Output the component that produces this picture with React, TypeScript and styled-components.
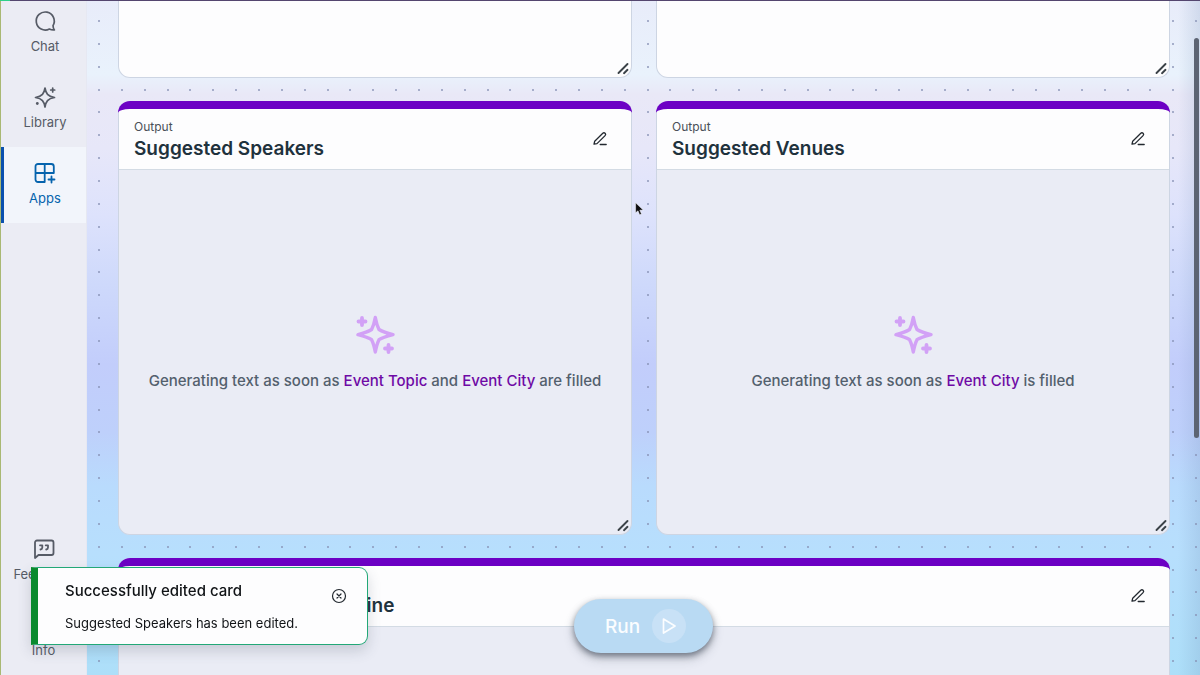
import React from "react";
import styled, { createGlobalStyle } from "styled-components";

const GlobalStyle = createGlobalStyle`
  *, *::before, *::after { box-sizing: border-box; }
  html, body, #root { height: 100%; }
  body {
    margin: 0;
    overflow: hidden;
    font-family: Inter, "Liberation Sans", sans-serif;
    color: #1f323d;
  }
  button { font: inherit; color: inherit; }
  p, h2 { margin: 0; }
`;

const Shell = styled.div`
  display: flex;
  height: 100vh;
  border-left: 1px solid #a9b873;
  position: relative;
`;

const TopEdge = styled.div`
  position: absolute;
  top: 0;
  left: -1px;
  right: 0;
  height: 1px;
  background: linear-gradient(90deg, #2fd08a 10px, #54466f 10px);
  z-index: 5;
`;

const Sidebar = styled.aside`
  flex: 0 0 86px;
  display: flex;
  flex-direction: column;
  justify-content: space-between;
  background: #ebecf4;
  border-right: 1px solid #e6e8f2;
  overflow: hidden;
`;

const Nav = styled.nav<{ $scrolled?: boolean }>`
  display: flex;
  flex-direction: column;
  margin-top: ${(p) => (p.$scrolled ? "-5px" : "0")};
`;

const NavLink = styled.a<{ $active?: boolean; $marker?: boolean }>`
  display: flex;
  flex-direction: column;
  align-items: center;
  gap: 3px;
  height: 76px;
  padding-top: 14px;
  border-left: ${(p) => (p.$marker ? "3px" : "0")} solid
    ${(p) => (p.$active ? "#0a50ae" : "transparent")};
  background: ${(p) => (p.$active ? "#f2f5fb" : "transparent")};
  color: ${(p) => (p.$active ? "#0563ad" : "#565b66")};
  font-size: 13px;
  line-height: 20px;
  text-decoration: none;
`;

const Main = styled.main`
  position: relative;
  flex: 1;
  min-width: 0;
  overflow: hidden;
  background:
    linear-gradient(90deg, transparent calc(100% - 22px), rgba(110, 140, 180, 0.2)),
    linear-gradient(
      180deg,
      #e8ecfa 0,
      #e9f2fc 11%,
      #e9e8f7 14%,
      #e7e7f9 22%,
      #dde2fc 32%,
      #ced9fb 42%,
      #c2cdfb 54%,
      #bed0fb 64%,
      #b9dbfd 72%,
      #b7dffd 82%,
      #addff9 100%
    );
`;

const DotLayer = styled.svg`
  position: absolute;
  inset: 0;
  width: 100%;
  height: 100%;
`;

const Board = styled.div`
  position: relative;
  display: grid;
  grid-template-columns: 1fr 1fr;
  grid-template-rows: 78px 433px 433px;
  gap: 24px;
  padding: 0 30px 0 31px;
`;

const CardBox = styled.section<{ $wide?: boolean; $tail?: boolean }>`
  position: relative;
  display: flex;
  flex-direction: column;
  grid-column: ${(p) => (p.$wide ? "1 / -1" : "auto")};
  margin-top: ${(p) => (p.$tail ? "0" : "-1px")};
  border: 1px solid #cdd5e3;
  border-top: 0;
  border-radius: ${(p) => (p.$tail ? "0 0 12px 12px" : "12px")};
  background: ${(p) => (p.$tail ? "#fdfdfe" : "#eaecf5")};
`;

const CardHeader = styled.header`
  display: flex;
  align-items: center;
  justify-content: space-between;
  height: 69px;
  padding: 8px 23px 0 15px;
  background: #fdfdfe;
  border-bottom: 1px solid #d3dbe4;
  border-radius: 12px 12px 0 0;
`;

const Heading = styled.div`
  padding-top: 2px;
`;

const Accent = styled.div`
  position: absolute;
  inset: 0 -1px auto -1px;
  height: 24px;
  border-top: 8px solid #6c00c4;
  border-radius: 12px 12px 0 0;
  pointer-events: none;
`;

const Kind = styled.p`
  font-size: 12px;
  line-height: 16px;
  color: #4a5058;
`;

const Title = styled.h2`
  font-size: 19px;
  line-height: 27px;
  font-weight: 600;
`;

const IconButton = styled.button`
  display: flex;
  padding: 0;
  border: 0;
  background: none;
  color: #22282f;
  cursor: pointer;
`;

const CardBody = styled.div`
  flex: 1;
  display: flex;
  flex-direction: column;
  align-items: center;
  justify-content: center;
  gap: 14px;
  padding-top: 4px;
`;

const Hint = styled.p`
  font-size: 15px;
  line-height: 24px;
  font-weight: 500;
  color: #53606d;
  white-space: nowrap;
`;

const Field = styled.span`
  color: #6f0aa5;
`;

const Grip = styled.svg`
  position: absolute;
  right: 1px;
  bottom: 2px;
`;

const ScrollThumb = styled.div`
  position: absolute;
  top: 38px;
  right: 1px;
  width: 5px;
  height: 400px;
  border-radius: 3px;
  background: #5c6473;
`;

const RunDock = styled.div`
  position: absolute;
  left: 0;
  right: 0;
  bottom: 22px;
  display: flex;
  justify-content: center;
`;

const RunButton = styled.button`
  display: flex;
  align-items: center;
  gap: 12px;
  height: 54px;
  padding: 0 27px 0 31px;
  border: 0;
  border-radius: 27px;
  background: #b9daf3;
  color: #fbfdff;
  font-size: 19px;
  font-weight: 500;
  box-shadow: 0 3px 6px rgba(50, 60, 75, 0.6), 0 6px 12px rgba(50, 60, 75, 0.2);
`;

const PlayDisc = styled.span`
  display: flex;
  align-items: center;
  justify-content: center;
  width: 34px;
  height: 34px;
  border-radius: 50%;
  background: #c8e1f6;
`;

const Toast = styled.div`
  position: fixed;
  left: 31px;
  bottom: 30px;
  display: flex;
  align-items: flex-start;
  justify-content: space-between;
  width: 337px;
  height: 78px;
  padding: 11px 20px 0 27px;
  border: 1px solid #22a877;
  border-left: 7px solid #0a8a2e;
  border-radius: 0 9px 9px 0;
  background: #fdfdfe;
  box-shadow: 0 6px 14px rgba(60, 70, 90, 0.2);
  color: #101316;
`;

const ToastText = styled.div`
  display: flex;
  flex-direction: column;
  gap: 10px;
`;

const ToastTitle = styled.p`
  font-size: 15px;
  line-height: 24px;
  font-weight: 500;
`;

const ToastMessage = styled.p`
  font-size: 13px;
  line-height: 20px;
`;

const ToastClose = styled(IconButton)`
  margin-top: 9px;
`;

const Pointer = styled.svg`
  position: absolute;
  left: 634px;
  top: 202px;
`;

const stroke = {
  fill: "none",
  stroke: "currentColor",
  strokeLinecap: "round" as const,
  strokeLinejoin: "round" as const,
};

const ChatIcon = () => (
  <svg width="24" height="24" viewBox="0 0 24 24" {...stroke} strokeWidth="1.7" aria-hidden>
    <path d="M20 16.600A9 9 0 1 0 16.400 20c1.500.8 3.200 1.100 5 .9-.9-1.200-1.400-2.700-1.400-4.300Z" />
  </svg>
);

const LibraryIcon = () => (
  <svg width="24" height="24" viewBox="0 0 24 24" {...stroke} strokeWidth="1.7" aria-hidden>
    <path d="M12 3c.9 5.500 2.700 8.300 9.500 9.500-6.800 1.200-8.600 4-9.500 9.500-.9-5.500-2.700-8.300-9.500-9.500C9.300 11.300 11.100 8.500 12 3Z" />
    <path d="M19.700 3v4M17.700 5h4" />
    <circle cx="4.300" cy="18.500" r="1.400" fill="currentColor" stroke="none" />
  </svg>
);

const AppsIcon = () => (
  <svg width="24" height="24" viewBox="0 0 24 24" {...stroke} strokeWidth="1.8" aria-hidden>
    <path d="M20.800 12V5.500a2.500 2.500 0 0 0-2.500-2.500H5a2.500 2.500 0 0 0-2.500 2.500v13A2.500 2.500 0 0 0 5 21h6.700V3M2.500 12h18.300" />
    <path d="M18.500 15.500v6M15.500 18.500h6" />
  </svg>
);

const FeedbackIcon = () => (
  <svg width="24" height="24" viewBox="0 0 24 24" {...stroke} strokeWidth="1.8" aria-hidden>
    <path d="M3 21V5.500A2 2 0 0 1 5 3.500h14.500a2 2 0 0 1 2 2v10.500a2 2 0 0 1-2 2H6.500Z" />
    <path d="M8 8.300h2.300v2.200c0 1-.8 1.800-1.800 2M13.700 8.300H16v2.200c0 1-.8 1.800-1.800 2" />
  </svg>
);

const InfoIcon = () => (
  <svg width="24" height="24" viewBox="0 0 24 24" {...stroke} strokeWidth="1.7" aria-hidden>
    <circle cx="12" cy="12" r="9" />
    <path d="M12 11v5M12 8v0" />
  </svg>
);

const EditIcon = () => (
  <svg width="16" height="16" viewBox="0 0 16 16" {...stroke} strokeWidth="1.300" aria-hidden>
    <path d="M2 13.200 2.700 10.200 10.800 2.300a1.600 1.600 0 0 1 2.300 2.300L5 12.600ZM8.200 13.500h6" />
  </svg>
);

const SparkleIcon = () => (
  <svg width="40" height="40" viewBox="0 0 40 40" {...stroke} stroke="#d2a1f6" aria-hidden>
    <path
      strokeWidth="3.400"
      d="M20.300 2.500C21.300 8 22.500 11.500 24 14.500c3 1.900 8 3.700 14 5.200-6 1.500-11 3-14 5-1.500 3-2.700 7-3.700 12.300-1-5.300-2.200-9.300-3.700-12.300-3-2-8-3.500-13.600-5 5.600-1.500 10.600-3.300 13.600-5.200 1.500-3 2.700-6.500 3.700-12Z"
    />
    <path strokeWidth="3.800" d="M7 3v7M3.500 6.500h7M33.500 30v7M30 33.500h7" />
  </svg>
);

const ResizeGrip = () => (
  <Grip width="13" height="13" viewBox="0 0 13 13" {...stroke} stroke="#3b4248" strokeWidth="1.900" aria-hidden>
    <path d="M1.500 11 10.500 2M7 11.200l3.500-3.400" />
  </Grip>
);

/* One 160px tile holds seven dots in each direction. */
const DOTS = [0, 23, 46, 69, 91, 114, 137];

const DotGrid = () => (
  <DotLayer aria-hidden>
    <defs>
      <pattern id="dots" x="11" y="20" width="160" height="160" patternUnits="userSpaceOnUse">
        {DOTS.map((y) =>
          DOTS.map((x) => (
            <circle key={`${x}-${y}`} cx={x + 1} cy={y + 1} r="1" fill="#8590b4" fillOpacity="0.9" />
          ))
        )}
      </pattern>
    </defs>
    <rect width="100%" height="100%" fill="url(#dots)" />
  </DotLayer>
);

type OutputCardProps = {
  title: string;
  wide?: boolean;
  children?: React.ReactNode;
};

const OutputCard = ({ title, wide, children }: OutputCardProps) => (
  <CardBox $wide={wide}>
    <CardHeader>
      <Heading>
        <Kind>Output</Kind>
        <Title>{title}</Title>
      </Heading>
      <IconButton type="button" aria-label={`Edit ${title}`}>
        <EditIcon />
      </IconButton>
    </CardHeader>
    <Accent />
    <CardBody>
      {children && (
        <>
          <SparkleIcon />
          <Hint>{children}</Hint>
        </>
      )}
    </CardBody>
    <ResizeGrip />
  </CardBox>
);

export default function App() {
  return (
    <Shell>
      <GlobalStyle />
      <TopEdge />
      <Sidebar>
        <Nav $scrolled aria-label="Main">
          <NavLink href="#chat" $marker>
            <ChatIcon />
            Chat
          </NavLink>
          <NavLink href="#library" $marker>
            <LibraryIcon />
            Library
          </NavLink>
          <NavLink href="#apps" $marker $active aria-current="page">
            <AppsIcon />
            Apps
          </NavLink>
        </Nav>
        <Nav aria-label="Support">
          <NavLink href="#feedback">
            <FeedbackIcon />
            Feedback
          </NavLink>
          <NavLink href="#info">
            <InfoIcon />
            Info
          </NavLink>
        </Nav>
      </Sidebar>
      <Main>
        <DotGrid />
        <Board>
          <CardBox $tail>
            <ResizeGrip />
          </CardBox>
          <CardBox $tail>
            <ResizeGrip />
          </CardBox>
          <OutputCard title="Suggested Speakers">
            Generating text as soon as <Field>Event Topic</Field> and <Field>Event City</Field> are
            filled
          </OutputCard>
          <OutputCard title="Suggested Venues">
            Generating text as soon as <Field>Event City</Field> is filled
          </OutputCard>
          <OutputCard title="Suggested Schedule Outline" wide />
        </Board>
        <ScrollThumb />
        <RunDock>
          <RunButton type="button">
            Run
            <PlayDisc>
              <svg width="20" height="20" viewBox="0 0 20 20" {...stroke} strokeWidth="1.700" aria-hidden>
                <path d="M4.500 3 16 10 4.500 17Z" />
              </svg>
            </PlayDisc>
          </RunButton>
        </RunDock>
      </Main>
      <Toast role="status">
        <ToastText>
          <ToastTitle>Successfully edited card</ToastTitle>
          <ToastMessage>Suggested Speakers has been edited.</ToastMessage>
        </ToastText>
        <ToastClose type="button" aria-label="Dismiss">
          <svg width="16" height="16" viewBox="0 0 16 16" {...stroke} strokeWidth="1.200" aria-hidden>
            <circle cx="8" cy="8" r="6.500" />
            <path d="m6 6 4 4M10 6l-4 4" />
          </svg>
        </ToastClose>
      </Toast>
      <Pointer width="10" height="14" viewBox="0 0 10 14" aria-hidden>
        <path d="M.6.8v10L3 8.800l1.600 4 1.900-.8-1.700-3.800 3.400-.1Z" fill="#0c0c10" stroke="#fff" strokeWidth=".5" />
      </Pointer>
    </Shell>
  );
}
